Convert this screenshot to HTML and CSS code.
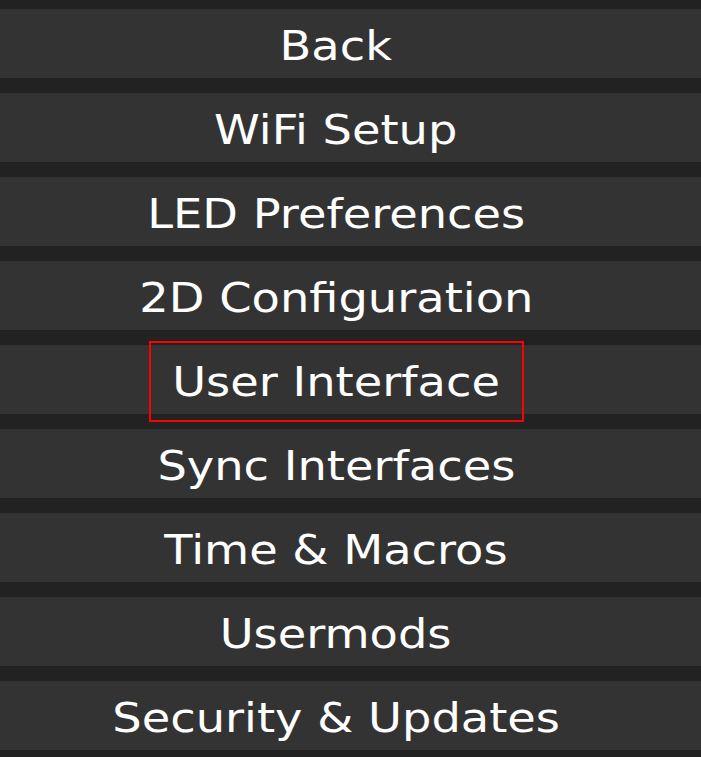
FILE: index.html
```html
<!doctype html>
<html lang="en">

<head>
  <meta charset="utf-8">
  <meta name="viewport" content="width=device-width, initial-scale=1.0">
  <title>Settings</title>
  <link rel="stylesheet" href="styles.css">
</head>

<body>
  <div class="main">
    <button class="btn"><span class="lbl">Back</span></button>
    <button class="btn"><span class="lbl">WiFi Setup</span></button>
    <button class="btn"><span class="lbl">LED Preferences</span></button>
    <button class="btn"><span class="lbl">2D Configuration</span></button>
    <button class="btn current"><span class="lbl">User Interface</span><span class="mark"></span></button>
    <button class="btn"><span class="lbl">Sync Interfaces</span></button>
    <button class="btn"><span class="lbl">Time &amp; Macros</span></button>
    <button class="btn"><span class="lbl">Usermods</span></button>
    <button class="btn"><span class="lbl">Security &amp; Updates</span></button>
  </div>
</body>
</html>
```

FILE: styles.css
```css
html {
  font-family: "DejaVu Sans", Verdana, sans-serif;
  background-color: #222;
}

body {
  margin: 0;
  height: 757px;
  overflow: hidden;
}

.main {
  display: flex;
  flex-direction: column;
  gap: 15px;
  padding-top: 9px;
}

.btn {
  position: relative;
  display: flex;
  align-items: center;
  justify-content: center;
  box-sizing: border-box;
  width: 100%;
  height: 69px;
  padding: 5px 0 0;
  margin: 0;
  border: none;
  background-color: #333;
  color: #fff;
  font-family: inherit;
  font-size: 41px;
  cursor: pointer;
}

/* the labels are drawn a bit wider than the font */
.lbl {
  display: inline-block;
  margin-right: 29px;
  white-space: nowrap;
  transform: scaleX(1.13);
}

/* red box around the current page */
.mark {
  position: absolute;
  left: 149px;
  top: -4px;
  width: 375px;
  height: 81px;
  box-sizing: border-box;
  border: 2px solid #f00;
}
```
